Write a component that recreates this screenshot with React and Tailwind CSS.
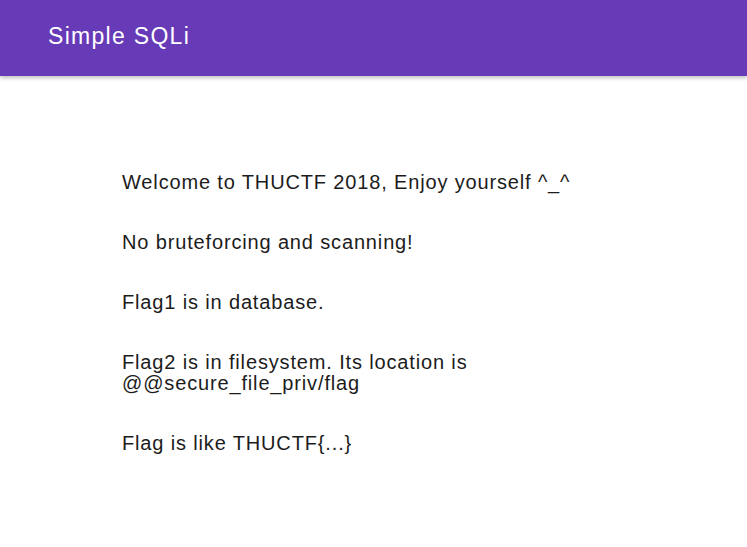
import React from 'react';

const lines = [
  'Welcome to THUCTF 2018, Enjoy yourself ^_^',
  'No bruteforcing and scanning!',
  'Flag1 is in database.',
  'Flag2 is in filesystem. Its location is @@secure_file_priv/flag',
  'Flag is like THUCTF{...}',
];

export default function App() {
  return (
    <div className="min-h-screen bg-white font-['Liberation_Sans',Arial,sans-serif]">
      {/* Toolbar */}
      <header className="flex h-[76px] items-center bg-[#673ab7] px-[48px] pb-[4px] shadow-[0_2px_4px_rgba(0,0,0,0.25)]">
        <h1 className="text-[23px] font-normal tracking-[1.3px] text-white">Simple SQLi</h1>
      </header>

      {/* Content */}
      <main className="mx-auto w-[503px] pt-[96px]">
        {lines.map((text) => (
          <p key={text} className="mb-[39px] text-[20px] leading-[21px] tracking-[0.85px] text-[#1c1c1c]">
            {text}
          </p>
        ))}
      </main>
    </div>
  );
}
